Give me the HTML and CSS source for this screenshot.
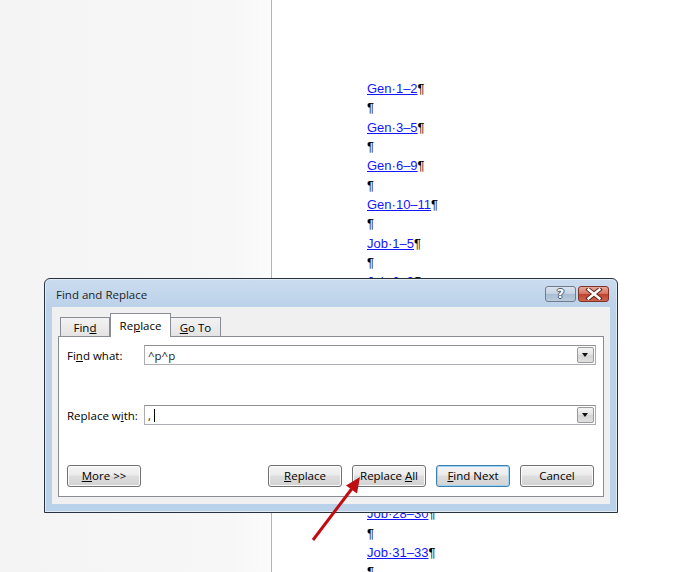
FILE: index.html
```html
<!DOCTYPE html>
<html lang="en">
<head>
    <meta charset="UTF-8">
    <title>Find and Replace</title>
    <link rel="stylesheet" href="styles.css">
</head>
<body>
    <div class="desk">
        <div class="sidebar"></div>
        <div class="page">
            <div class="line"><a class="ref">Gen·1–2</a>¶</div>
            <div class="line">¶</div>
            <div class="line"><a class="ref">Gen·3–5</a>¶</div>
            <div class="line">¶</div>
            <div class="line"><a class="ref">Gen·6–9</a>¶</div>
            <div class="line">¶</div>
            <div class="line"><a class="ref">Gen·10–11</a>¶</div>
            <div class="line">¶</div>
            <div class="line"><a class="ref">Job·1–5</a>¶</div>
            <div class="line">¶</div>
            <div class="line"><a class="ref">Job·6–9</a>¶</div>
            <div class="line">¶</div>
            <div class="line"><a class="ref">Job·10–14</a>¶</div>
            <div class="line">¶</div>
            <div class="line"><a class="ref">Job·15–18</a>¶</div>
            <div class="line">¶</div>
            <div class="line"><a class="ref">Job·19–21</a>¶</div>
            <div class="line">¶</div>
            <div class="line"><a class="ref">Job·22–24</a>¶</div>
            <div class="line">¶</div>
            <div class="line"><a class="ref">Job·25–27</a>¶</div>
            <div class="line">¶</div>
            <div class="line"><a class="ref">Job·28–30</a>¶</div>
            <div class="line">¶</div>
            <div class="line"><a class="ref">Job·31–33</a>¶</div>
            <div class="line">¶</div>
        </div>
    </div>

    <!-- dialog window over the document -->
    <div class="dialog">
        <div class="titlebar">
            <span class="title">Find and Replace</span>
            <div class="caption-btns">
                <span class="cap help">?</span>
                <span class="cap close">
                    <svg width="18" height="12" viewBox="0 0 18 12">
                        <path d="M3.5 1.5 L14.5 10.5 M14.5 1.5 L3.5 10.5" stroke="#5a2a20" stroke-width="4.4" stroke-linecap="square" fill="none"/>
                        <path d="M3.5 1.5 L14.5 10.5 M14.5 1.5 L3.5 10.5" stroke="#fff" stroke-width="2.4" stroke-linecap="square" fill="none"/>
                    </svg>
                </span>
            </div>
        </div>
        <div class="client">
            <div class="tabs">
                <span class="tab">Fin<u>d</u></span>
                <span class="tab active">Re<u>p</u>lace</span>
                <span class="tab"><u>G</u>o To</span>
            </div>
            <div class="panel">
                <div class="row">
                    <span class="label">Fi<u>n</u>d what:</span>
                    <div class="combo">
                        <span class="value">^p^p</span>
                        <span class="drop"></span>
                    </div>
                </div>
                <div class="row spaced">
                    <span class="label">Replace w<u>i</u>th:</span>
                    <div class="combo">
                        <span class="value">,<span class="caret"></span></span>
                        <span class="drop"></span>
                    </div>
                </div>
                <div class="buttons">
                    <span class="btn"><u>M</u>ore &gt;&gt;</span>
                    <span class="spacer"></span>
                    <span class="btn"><u>R</u>eplace</span>
                    <span class="btn">Replace <u>A</u>ll</span>
                    <span class="btn default"><u>F</u>ind Next</span>
                    <span class="btn">Cancel</span>
                </div>
            </div>
        </div>
    </div>

    <svg class="arrow" width="698" height="572" viewBox="0 0 698 572">
        <line x1="313" y1="540" x2="352" y2="488.5" stroke="#c00d12" stroke-width="3"/>
        <polygon points="360,477 357,493.5 346,485.5" fill="#c00d12"/>
    </svg>
</body>
</html>
```

FILE: styles.css
```css
body {
    margin: 0;
    width: 698px;
    height: 572px;
    overflow: hidden;
    position: relative;
    background: #fff;
    font-family: "Open Sans", "Noto Sans", sans-serif;
}

.desk { display: flex; height: 572px; }

.sidebar {
    width: 271px;
    background: linear-gradient(to right, #f4f4f4, #f7f7f7 85%, #fbfbfb);
    border-right: 1px solid #b4b4b4;
}

.page {
    flex: 1;
    padding: 79px 0 0 95px;
    font-family: "Liberation Sans", Arial, sans-serif;
    font-size: 13px;
    color: #000;
}
.line { height: 19.33px; line-height: 19.33px; white-space: nowrap; }
.ref { color: #1515ff; text-decoration: underline; }

/* dialog */
.dialog {
    position: absolute;
    left: 44px;
    top: 278px;
    width: 574px;
    height: 235px;
    box-sizing: border-box;
    border: 1px solid #27323f;
    border-radius: 6px 6px 0 0;
    padding: 0 7px 7px 7px;
    background: linear-gradient(#cadcef, #bcd2e9 28px, #b9d1e9);
    box-shadow: inset 0 0 0 1px #e0ebf6;
}

.titlebar {
    height: 28px;
    box-sizing: border-box;
    padding: 7px 1px 0 4px;
    display: flex;
    justify-content: space-between;
    align-items: flex-start;
}
.title { font-size: 11.5px; line-height: 18px; color: #1e1e1e; }

.caption-btns { display: flex; gap: 2px; }
.cap {
    width: 31px;
    height: 16px;
    box-sizing: border-box;
    border: 1px solid #6d7c8e;
    border-radius: 3px;
    display: flex;
    align-items: center;
    justify-content: center;
}
.help {
    background: linear-gradient(#dbe4ee, #c2d1e2 50%, #a9bcd3 51%, #bccbdd);
    color: #fff;
    font-family: "DejaVu Sans", sans-serif;
    font-weight: bold;
    font-size: 13px;
    line-height: 14px;
    text-shadow: -1px 0 #4a5a6c, 1px 0 #4a5a6c, 0 -1px #4a5a6c, 0 1px #4a5a6c;
}
.close {
    border-color: #7a3429;
    background: linear-gradient(#e8a99c, #d7705e 50%, #c0402d 51%, #d0654f);
}

.client {
    height: 197px;
    box-sizing: border-box;
    background: #f0f0f0;
    padding: 6px 6px 7px 6px;
}

.tabs { display: flex; align-items: flex-end; height: 23px; padding-left: 2px; }
.tab {
    height: 19px;
    box-sizing: border-box;
    width: 50px;
    border: 1px solid #898c95;
    border-bottom: none;
    background: linear-gradient(#f3f3f3, #e3e3e3);
    font-size: 11.5px;
    line-height: 19px;
    text-align: center;
    color: #000;
}
.tab + .tab { border-left: none; }
.tab.active {
    width: 61px;
    height: 24px;
    margin-bottom: -1px;
    position: relative;
    background: #fff;
    border-left: 1px solid #898c95;
    line-height: 23px;
}
.tab.active + .tab { border-left: none; }

.panel {
    height: 161px;
    box-sizing: border-box;
    border: 1px solid #898c95;
    background: #fff;
    padding: 8px 7px 9px 8px;
    font-size: 11.5px;
}

.row { display: flex; align-items: center; height: 20px; }
.row.spaced { margin-top: 40px; }
.label { width: 77px; color: #000; }
.combo {
    flex: 1;
    height: 20px;
    box-sizing: border-box;
    border: 1px solid #abadb3;
    border-top-color: #8e8f8f;
    display: flex;
    align-items: center;
    justify-content: space-between;
    padding: 0 1px 0 3px;
}
.value { color: #222; display: flex; align-items: center; }
.caret { display: inline-block; width: 1px; height: 13px; background: #000; margin-left: 3px; }
.drop {
    width: 17px;
    height: 16px;
    box-sizing: border-box;
    border: 1px solid #9a9a9a;
    border-radius: 2px;
    background: linear-gradient(#f4f4f4, #e2e2e2 50%, #d4d4d4 51%, #e0e0e0);
    position: relative;
}
.drop::after {
    content: "";
    position: absolute;
    left: 4px;
    top: 5px;
    border-left: 3.5px solid transparent;
    border-right: 3.5px solid transparent;
    border-top: 4px solid #111;
}

.buttons { display: flex; gap: 10px; margin-top: 40px; padding-right: 2px; }
.spacer { flex: 1; }
.btn {
    width: 74px;
    height: 22px;
    box-sizing: border-box;
    border: 1px solid #707070;
    border-radius: 3px;
    background: linear-gradient(#f4f4f4, #ececec 45%, #dedede 50%, #d2d2d2);
    box-shadow: inset 0 0 0 1px #fcfcfc;
    font-size: 11.5px;
    line-height: 20px;
    text-align: center;
    color: #000;
}
.btn.default {
    border-color: #3c7fb1;
    box-shadow: inset 0 0 0 1px #9fd3f5;
}

.arrow { position: absolute; left: 0; top: 0; pointer-events: none; }
```
